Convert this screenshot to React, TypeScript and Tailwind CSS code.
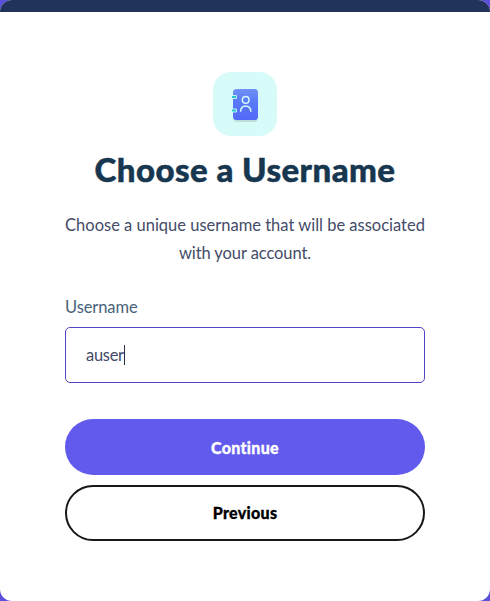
import React from "react";

function ContactBookIcon() {
  return (
    <svg width="64" height="64" viewBox="0 0 64 64" fill="none" aria-hidden="true">
      <defs>
        <linearGradient id="cover" x1="32" y1="17" x2="32" y2="48" gradientUnits="userSpaceOnUse">
          <stop stopColor="#7090f5" />
          <stop offset="0.4" stopColor="#597bf7" />
          <stop offset="1" stopColor="#5468f8" />
        </linearGradient>
      </defs>
      <rect x="20.5" y="19" width="24" height="31" rx="3.5" fill="#bfddd9" />
      <rect x="20" y="17" width="25" height="31" rx="3.5" fill="url(#cover)" />
      <path d="M20 23h3a1 1 0 0 1 1 1v2a1 1 0 0 1-1 1h-3zM20 36.5h3a1 1 0 0 1 1 1v2a1 1 0 0 1-1 1h-3z" fill="#c5edf5" />
      <path d="M19 25h4M19 38.5h4" stroke="#27c5d8" strokeWidth="1.8" />
      <circle cx="32.7" cy="27.9" r="3.3" stroke="#d7fbf9" strokeWidth="1.5" />
      <path d="M27.6 39.8v-.8a5.1 5.1 0 0 1 10.2 0v.8" stroke="#d7fbf9" strokeWidth="1.5" />
    </svg>
  );
}

export default function App() {
  return (
    <main className="h-[601px] w-[490px] overflow-hidden bg-[#5a4fdb] font-['Lato','Open_Sans',sans-serif] [font-variant-ligatures:none]">
      <section className="flex h-full flex-col overflow-hidden rounded-xl bg-white">
        <div className="h-3 shrink-0 bg-[#22335b]" />
        <div className="flex flex-col px-[65px] pt-[60px]">
          <div className="mx-auto h-16 w-16 rounded-[18px] bg-[#d7fbf9]">
            <ContactBookIcon />
          </div>
          <h1 className="mt-[11px] text-center text-[33px] leading-[44px] font-black tracking-[0.45px] whitespace-nowrap text-[#17364f] [-webkit-text-stroke:0.5px_#17364f]">
            Choose a Username
          </h1>
          <p className="mt-5 text-center text-[16.5px] leading-7 whitespace-nowrap text-[#444b68]">
            Choose a unique username that will be associated
            <br />
            <span className="tracking-[-0.08px]">with your account.</span>
          </p>
          <label className="mt-[26px] text-[16.5px] leading-7 tracking-[-0.1px] text-[#48637a]">Username</label>
          <div className="mt-[6px] flex h-14 items-center rounded-[5px] border border-[#5045c4] px-5 text-[16.5px] tracking-[-0.3px] text-[#444b68]">
            <span>auser</span>
            <span className="h-5 w-px bg-[#252b48]" />
          </div>
          <button className="mt-9 h-14 rounded-full bg-[#625aed] pt-px text-[16px] font-black tracking-[0.3px] text-white [-webkit-text-stroke:0.3px_white]">
            Continue
          </button>
          <button className="mt-[10px] h-14 rounded-full border-2 border-[#181818] bg-white text-[16px] font-black tracking-[0.3px] text-black [-webkit-text-stroke:0.3px_black]">
            Previous
          </button>
        </div>
      </section>
    </main>
  );
}
